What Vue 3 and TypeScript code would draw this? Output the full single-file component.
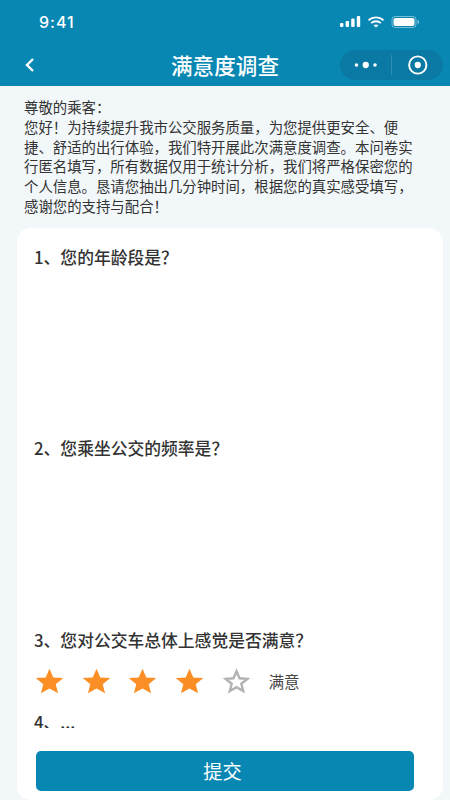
<script setup lang="ts">
const intro: string[] = [
  '尊敬的乘客：',
  '您好！为持续提升我市公交服务质量，为您提供更安全、便捷、舒适的出行体验，我们特开展此次满意度调查。本问卷实行匿名填写，所有数据仅用于统计分析，我们将严格保密您的个人信息。恳请您抽出几分钟时间，根据您的真实感受填写，感谢您的支持与配合！',
]
const stars: boolean[] = [true, true, true, true, false]
</script>

<template>
  <div class="page">
    <header class="top">
      <div class="status">
        <span class="time">9:41</span>
        <div class="status-icons">
          <svg width="21" height="11" viewBox="0 0 21 11" fill="#fff">
            <rect x="0" y="7" width="3.4" height="4" rx="1" />
            <rect x="5.6" y="5" width="3.4" height="6" rx="1" />
            <rect x="11.2" y="2.5" width="3.4" height="8.5" rx="1" />
            <rect x="16.8" y="0" width="3.4" height="11" rx="1" />
          </svg>
          <svg width="18" height="12" viewBox="0 0 17 12" fill="none" stroke="#fff" stroke-width="1.9">
            <path d="M1 4.2C5.2 .4 11.8 .4 16 4.2" />
            <path d="M3.7 7C6.4 4.7 10.6 4.7 13.3 7" />
            <path d="M8.5 11.6 6 9.2C7.4 8.2 9.6 8.2 11 9.2Z" fill="#fff" stroke="none" />
          </svg>
          <svg width="29" height="12" viewBox="0 0 28 12">
            <rect x=".5" y=".5" width="24" height="11" rx="3.2" fill="none" stroke="#fff" stroke-opacity=".45" />
            <rect x="2" y="2" width="21" height="8" rx="2" fill="#fff" />
            <path d="M26 4v4c1-.3 1.6-1.1 1.6-2S27 4.3 26 4Z" fill="#fff" fill-opacity=".5" />
          </svg>
        </div>
      </div>
      <nav class="nav">
        <svg class="back" width="12" height="16" viewBox="0 0 12 16" fill="none" stroke="#fff" stroke-width="2.4">
          <path d="M9 2 3 8l6 6" />
        </svg>
        <h1 class="title">满意度调查</h1>
        <div class="capsule">
          <svg width="24" height="8" viewBox="0 0 24 8" fill="#fff">
            <circle cx="2.5" cy="4" r="1.8" />
            <circle cx="12" cy="4" r="3.2" />
            <circle cx="21.5" cy="4" r="1.8" />
          </svg>
          <span class="divider"></span>
          <svg width="22" height="22" viewBox="0 0 22 22" fill="none">
            <circle cx="11" cy="11" r="8.8" stroke="#fff" stroke-width="2" />
            <circle cx="11" cy="11" r="3.2" fill="#fff" />
          </svg>
        </div>
      </nav>
    </header>

    <section class="intro">
      <p v-for="line in intro" :key="line">{{ line }}</p>
    </section>

    <main class="card">
      <div class="questions">
        <div class="question tall">
          <h2>1、您的年龄段是？</h2>
        </div>
        <div class="question tall">
          <h2>2、您乘坐公交的频率是？</h2>
        </div>
        <div class="question">
          <h2>3、您对公交车总体上感觉是否满意？</h2>
          <div class="rating">
            <svg
              v-for="(on, i) in stars"
              :key="i"
              class="star"
              width="29"
              height="26"
              viewBox="0 0 29 26"
            >
              <path
                v-if="on"
                d="M14.5 .8 18.3 9.4 28.3 10.1 20.7 16.3 23.1 25.3 14.5 20.5 5.9 25.3 8.3 16.3 .7 10.1 10.7 9.4Z"
                fill="#fb8f25"
              />
              <path
                v-else
                d="M14.5 3.3 17.5 10.3 25.3 10.9 19.3 15.8 21.2 23 14.5 19.1 7.8 23 9.7 15.8 3.7 10.9 11.5 10.3Z"
                fill="none"
                stroke="#b2b2b2"
                stroke-width="2.4"
              />
            </svg>
            <span class="rating-label">满意</span>
          </div>
        </div>
        <h2 class="more">4、...</h2>
      </div>
      <div class="footer">
        <button class="submit" type="button">提交</button>
      </div>
    </main>
  </div>
</template>

<style>
html,
body {
  margin: 0;
  padding: 0;
  background: #f2f7fa;
}
</style>

<style scoped>
.page {
  width: 450px;
  height: 800px;
  overflow: hidden;
  display: flex;
  flex-direction: column;
  background: #f2f7fa;
  font-family: "Noto Sans CJK SC", "Noto Sans", sans-serif;
  color: #333;
}
.top {
  height: 86px;
  flex: none;
  background: #0887b3;
  color: #fff;
}
.status {
  height: 43px;
  padding: 0 30px 0 39px;
  box-sizing: border-box;
  display: flex;
  align-items: center;
  justify-content: space-between;
}
.time {
  font-family: Inter, "Liberation Sans", sans-serif;
  font-size: 16px;
  font-weight: 500;
  letter-spacing: 1px;
}
.status-icons {
  display: flex;
  align-items: center;
  gap: 6px;
}
.nav {
  height: 43px;
  display: flex;
  align-items: center;
  justify-content: space-between;
  padding: 0 7px 0 24px;
  position: relative;
}
.title {
  position: absolute;
  left: 0;
  right: 0;
  margin: 0;
  text-align: center;
  font-size: 21.6px;
  font-weight: 500;
  line-height: 30px;
}
.capsule {
  width: 103px;
  height: 30px;
  border-radius: 15px;
  background: #0a7aa4;
  display: flex;
  align-items: center;
  padding: 0 14px 0 14px;
  box-sizing: border-box;
}
.divider {
  width: 1px;
  height: 20px;
  margin: 0 15px 0 14px;
  background: rgba(255, 255, 255, 0.15);
}
.intro {
  flex: none;
  padding: 11px 36px 12px 24px;
  font-size: 14.4px;
  line-height: 19.8px;
  color: #333;
}
.intro p {
  margin: 0;
}
.card {
  flex: 1;
  min-height: 0;
  margin: 0 7px 0 17px;
  background: #fff;
  border-radius: 14px;
  display: flex;
  flex-direction: column;
}
.questions {
  height: 500px;
  flex: none;
  overflow: hidden;
  padding: 17px 17px 0;
  box-sizing: border-box;
}
h2 {
  margin: 0;
  font-size: 16.8px;
  line-height: 24px;
  font-weight: 500;
  color: #333;
}
.question.tall {
  height: 191.5px;
}
.rating {
  display: flex;
  align-items: center;
  gap: 17.7px;
  height: 26px;
  margin: 16px 0 0 1px;
}
.star {
  display: block;
}
.rating-label {
  font-size: 15.6px;
  color: #444;
}
.more {
  margin-top: 16px;
}
.footer {
  padding: 23px 29px 0 19px;
}
.submit {
  display: block;
  width: 100%;
  height: 40px;
  border: 0;
  border-radius: 5px;
  padding: 0 5px 0 0;
  background: #0887b3;
  color: #fff;
  font: inherit;
  font-size: 19.2px;
}
</style>
